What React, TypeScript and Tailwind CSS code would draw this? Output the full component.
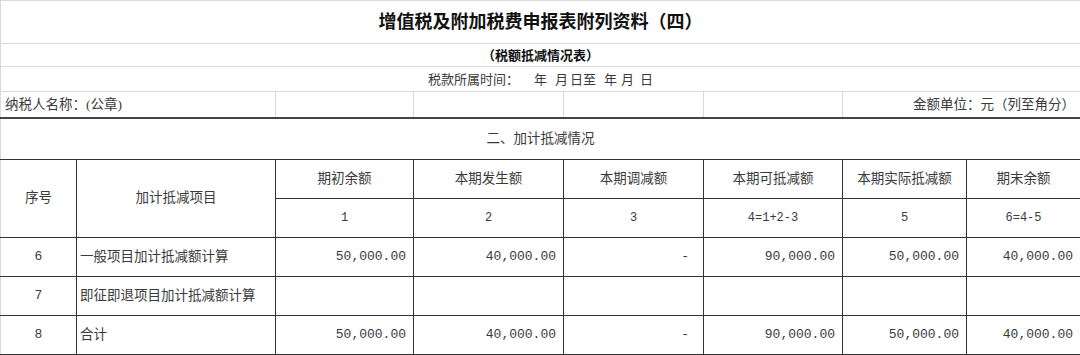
import React from "react";

const G = "border border-[#d9d9d9]";
const D = "border border-[#333333]";
const MONO = { fontFamily: '"Liberation Mono", monospace' };

const rows = [
  { n: "6", name: "一般项目加计抵减额计算", v: ["50,000.00", "40,000.00", "-", "90,000.00", "50,000.00", "40,000.00"] },
  { n: "7", name: "即征即退项目加计抵减额计算", v: ["", "", "", "", "", ""] },
  { n: "8", name: "合计", v: ["50,000.00", "40,000.00", "-", "90,000.00", "50,000.00", "40,000.00"] },
];

export default function App() {
  return (
    <div
      className="w-[1080px] h-[355px] bg-white text-[#3a3a3a] overflow-hidden"
      style={{ fontFamily: '"Liberation Serif", "Noto Sans CJK SC", serif' }}
    >
      <table className="w-[1080px] table-fixed border-collapse">
        <colgroup>
          <col className="w-[76px]" />
          <col className="w-[199px]" />
          <col className="w-[138px]" />
          <col className="w-[150px]" />
          <col className="w-[140px]" />
          <col className="w-[139px]" />
          <col className="w-[124px]" />
          <col className="w-[114px]" />
        </colgroup>
        <tbody>
          <tr>
            <td colSpan={8} className={`${G} h-[43px] p-0 text-center text-[18px] font-bold text-[#111] leading-none`}>
              增值税及附加税费申报表附列资料（四）
            </td>
          </tr>
          <tr>
            <td colSpan={8} className={`${G} h-[23px] p-0 text-center text-[13px] font-bold text-[#111] leading-none`}>
              （税额抵减情况表）
            </td>
          </tr>
          <tr>
            <td colSpan={8} className={`${G} h-[25px] p-0 text-[13px] leading-none`}>
              <div className="flex justify-center">
                <span>税款所属时间：</span>
                <span className="ml-[15px]">年</span>
                <span className="ml-[8px]">月</span>
                <span className="ml-[2px]">日至</span>
                <span className="ml-[8px]">年</span>
                <span className="ml-[4px]">月</span>
                <span className="ml-[6px]">日</span>
              </div>
            </td>
          </tr>
          <tr>
            <td colSpan={2} className={`${G} border-b-2 border-b-[#444] h-[26px] p-0 pl-[4px] text-[13.5px] leading-none`}>
              纳税人名称：(公章)
            </td>
            <td className={`${G} border-b-2 border-b-[#444] p-0`}></td>
            <td className={`${G} border-b-2 border-b-[#444] p-0`}></td>
            <td className={`${G} border-b-2 border-b-[#444] p-0`}></td>
            <td className={`${G} border-b-2 border-b-[#444] p-0`}></td>
            <td colSpan={2} className={`${G} border-b-2 border-b-[#444] p-0 pr-[5px] text-right text-[13.5px] leading-none`}>
              金额单位：元（列至角分）
            </td>
          </tr>
          <tr>
            <td colSpan={8} className={`${D} border-l-[#d9d9d9] h-[42px] p-0 text-center text-[13.5px] leading-none`}>
              二、加计抵减情况
            </td>
          </tr>
          <tr>
            <td rowSpan={2} className={`${D} border-l-[#d9d9d9] border-t-[#999] p-0 text-center text-[13.5px]`}>序号</td>
            <td rowSpan={2} className={`${D} border-t-[#999] p-0 text-center text-[13.5px]`}>加计抵减项目</td>
            {["期初余额", "本期发生额", "本期调减额", "本期可抵减额", "本期实际抵减额", "期末余额"].map((t, i) => (
              <td key={i} className={`${D} h-[39px] p-0 text-center text-[13.5px]`}>{t}</td>
            ))}
          </tr>
          <tr>
            {["1", "2", "3", "4=1+2-3", "5", "6=4-5"].map((t, i) => (
              <td key={i} className={`${D} h-[39px] p-0 text-center text-[12px]`} style={MONO}>{t}</td>
            ))}
          </tr>
          {rows.map((r) => (
            <tr key={r.n}>
              <td className={`${D} border-l-[#d9d9d9] h-[39px] p-0 text-center text-[13px]`} style={MONO}>{r.n}</td>
              <td className={`${D} p-0 pl-[3px] text-left text-[13.5px]`}>{r.name}</td>
              {r.v.map((v, i) => (
                <td
                  key={i}
                  className={`${D} p-0 text-right text-[13px] ${v === "-" ? "pr-[14px]" : "pr-[7px]"}`}
                  style={MONO}
                >
                  {v}
                </td>
              ))}
            </tr>
          ))}
        </tbody>
      </table>
    </div>
  );
}
